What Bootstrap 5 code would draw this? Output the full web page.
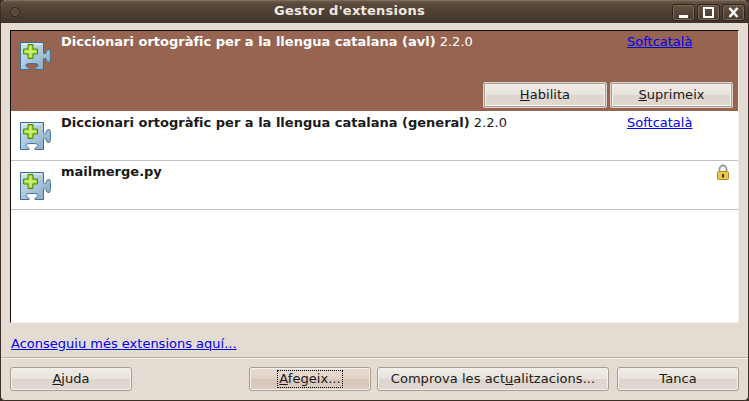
<!DOCTYPE html>
<html lang="ca">
<head>
<meta charset="utf-8">
<title>Gestor d'extensions</title>
<link href="https://cdn.jsdelivr.net/npm/bootstrap@5.3.0/dist/css/bootstrap.min.css" rel="stylesheet">
<style>
html,body{height:401px;margin:0;overflow:hidden;background:#3c2f26}
body{font-family:"DejaVu Sans",sans-serif;font-size:13px;line-height:16px;color:#1a1a1a}
.win{width:749px;height:401px;border-radius:6px 6px 5px 5px;overflow:hidden;background:#e4dcd3;border:1px solid #3a2e26;border-top:0}
.tbar{height:23px;background:linear-gradient(#6a5848 0,#5a493b 3px,#4c3d31 14px,#3f3228 100%);color:#efe9e2;border-top:1px solid #7d6b5b;padding-left:9px;padding-right:3px;flex:none}
.tdot{width:10px;height:10px;border-radius:50%;border:1px solid #2c231c;background:#57473a;box-shadow:inset 0 0 0 1px #6d5c4d}
.ttl{font-weight:700;font-size:13px;letter-spacing:.25px;line-height:18px;left:0;right:50px;top:1px;text-align:center}
.wb{width:23px;height:17px;border:1px solid #2e251e;border-radius:3px;background:linear-gradient(#64523f,#4a3a2e);box-shadow:inset 0 0 0 1px #7a6858;margin-left:2px}
.bodyp{padding:7px 9px 0 9px}
.lst{height:293px;background:#fff;border:1px solid #f2eeea;border-top:1px solid #111;border-left:1px solid #111;border-bottom:1px solid #f5f1ed}
.rowx{padding:3px 5px 0 8px;border-bottom:1px solid #c4c0bc;height:49px}
.rowx.rw2{height:50px;padding-top:4px}
.rowx.sel{background:#966450;color:#fff;height:80px;border-bottom:0;padding-top:3px}
.sel .toprow{height:48px}
.ico{width:32px;height:32px;margin-top:6px;flex:none}
.rw2 .ico{margin-top:5px}
.sel .ico{margin-top:6px}
.rtxt{margin-left:10px;width:566px}
a.lnk{color:#0000ee;text-decoration:underline}
.slnk{width:100px}
.gbtn{height:24px;border:1px solid #a89d91;border-radius:3px;background:linear-gradient(#f1ece7 0,#e9e3dd 48%,#ddd5cd 52%,#e0d9d2 100%);color:#1a1a1a;font-size:13px;line-height:20px;padding:0;text-align:center;letter-spacing:.05px;box-shadow:inset 0 0 0 1px #f4f0ec}
.gbtn.sm{height:26px;width:124px;border:1px solid #dcd4cc;border-radius:2px;line-height:22px;box-shadow:inset 0 0 0 1px #a89d91,inset 0 0 0 2px #f4f0ec}
.gbtn.sm.narrow{width:123px}
.gbtn.act{background:linear-gradient(#eadcd2 0,#e2d3c8 48%,#d7c5b9 52%,#dccbbf 100%)}
.fc{outline:1px dotted #000;padding:0 1px;display:inline-block;line-height:16px}
.acts{gap:3px;height:26px}
.lnkline{padding:13px 0 0 1px;height:34px}
.sep{height:1px;background:#b9b1a8;border-bottom:1px solid #f5f1ed;box-sizing:content-box;margin:0 -9px}
.foot{padding-top:8px}
.w122{width:122px}.w232{width:232px}
.sp1{width:117px}
.gapl{margin-left:6px}
.lck{flex:none;margin-right:3px}
</style>
</head>
<body>
<svg width="0" height="0" class="position-absolute">
<defs>
<linearGradient id="pz" x1="0" y1="0" x2="1" y2="1"><stop offset="0" stop-color="#d6e6f2"/><stop offset="1" stop-color="#7ea5c4"/></linearGradient>
<symbol id="puzzle" viewBox="0 0 32 32">
<path d="M1.500 2.500H24.500V13C25.500 14 26 14 27 13C27 10 29 9.500 30 9.500C31.500 9.500 31.500 13 31.500 16C31.500 19 31.500 22.500 30 22.500C29 22.500 27 22 27 19C26 18 25.500 18 24.500 19V29.500H16C15 28 18 27 19 26C20 24 17 23.500 13 23.500C9 23.500 6 24 7 26C8 27 11 28 10 29.500H1.500Z" fill="url(#pz)" stroke="#3f6d93" stroke-width="1"/>
<path d="M3 4H23" stroke="#eef6fc" stroke-width="1"/>
<path d="M9 4.500H14V9H18.500V14H14V18.500H9V14H4.500V9H9Z" fill="#9bd52b" stroke="#4d8a12" stroke-width="1"/>
<path d="M10.500 6H12.500V10.500H17V12.500H12.500V17H10.500V12.500H6V10.500H10.500Z" fill="#d4f07a"/>
</symbol>
</defs>
</svg>
<div class="win d-flex flex-column">
  <div class="tbar d-flex align-items-center position-relative">
    <span class="tdot"></span>
    <div class="ttl position-absolute">Gestor d'extensions</div>
    <div class="ms-auto d-flex position-relative">
      <div class="wb d-flex align-items-center justify-content-center"><svg width="13" height="11" viewBox="0 0 13 11"><rect x="2" y="8" width="9" height="3" fill="#fff"/></svg></div>
      <div class="wb d-flex align-items-center justify-content-center"><svg width="13" height="11" viewBox="0 0 13 11"><rect x="2" y="1" width="9" height="9" fill="none" stroke="#fff" stroke-width="2"/></svg></div>
      <div class="wb d-flex align-items-center justify-content-center"><svg width="13" height="11" viewBox="0 0 13 11"><path d="M2.500 1L10.500 10M10.500 1L2.500 10" stroke="#fff" stroke-width="2.600"/></svg></div>
    </div>
  </div>
  <div class="bodyp flex-grow-1">
    <div class="lst">
      <div class="rowx sel">
        <div class="d-flex toprow">
          <svg class="ico"><use href="#puzzle"/></svg>
          <div class="rtxt"><b>Diccionari ortogràfic per a la llengua catalana (avl)</b> <span>2.2.0</span></div>
          <a class="lnk slnk" href="#">Softcatalà</a>
        </div>
        <div class="d-flex justify-content-end acts">
          <button class="gbtn sm"><u>H</u>abilita</button>
          <button class="gbtn sm narrow"><u>S</u>uprimeix</button>
        </div>
      </div>
      <div class="rowx rw2">
        <div class="d-flex">
          <svg class="ico"><use href="#puzzle"/></svg>
          <div class="rtxt"><b>Diccionari ortogràfic per a la llengua catalana (general)</b> <span>2.2.0</span></div>
          <a class="lnk slnk" href="#">Softcatalà</a>
        </div>
      </div>
      <div class="rowx">
        <div class="d-flex">
          <svg class="ico"><use href="#puzzle"/></svg>
          <div class="rtxt flex-grow-1"><b>mailmerge.py</b></div>
          <svg width="14" height="17" viewBox="0 0 14 17" class="lck"><path d="M3.500 8V5a3.500 3.500 0 0 1 7 0v3" fill="none" stroke="#9a9a92" stroke-width="1.800"/><rect x="1.500" y="7.500" width="11" height="8" rx="1" fill="#edc84f" stroke="#a98a2a"/><rect x="6" y="10" width="2" height="3.500" fill="#3d3209"/></svg>
        </div>
      </div>
    </div>
    <div class="lnkline"><a class="lnk" href="#">Aconseguiu més extensions aquí...</a></div>
    <div class="sep"></div>
    <div class="foot d-flex">
      <button class="gbtn w122"><u>A</u>juda</button>
      <div class="sp1"></div>
      <button class="gbtn w122 act"><span class="fc"><u>A</u>fegeix...</span></button>
      <button class="gbtn w232 gapl">Comprova les act<u>u</u>alitzacions...</button>
      <button class="gbtn w122 ms-auto">Tanca</button>
    </div>
  </div>
</div>
</body>
</html>
